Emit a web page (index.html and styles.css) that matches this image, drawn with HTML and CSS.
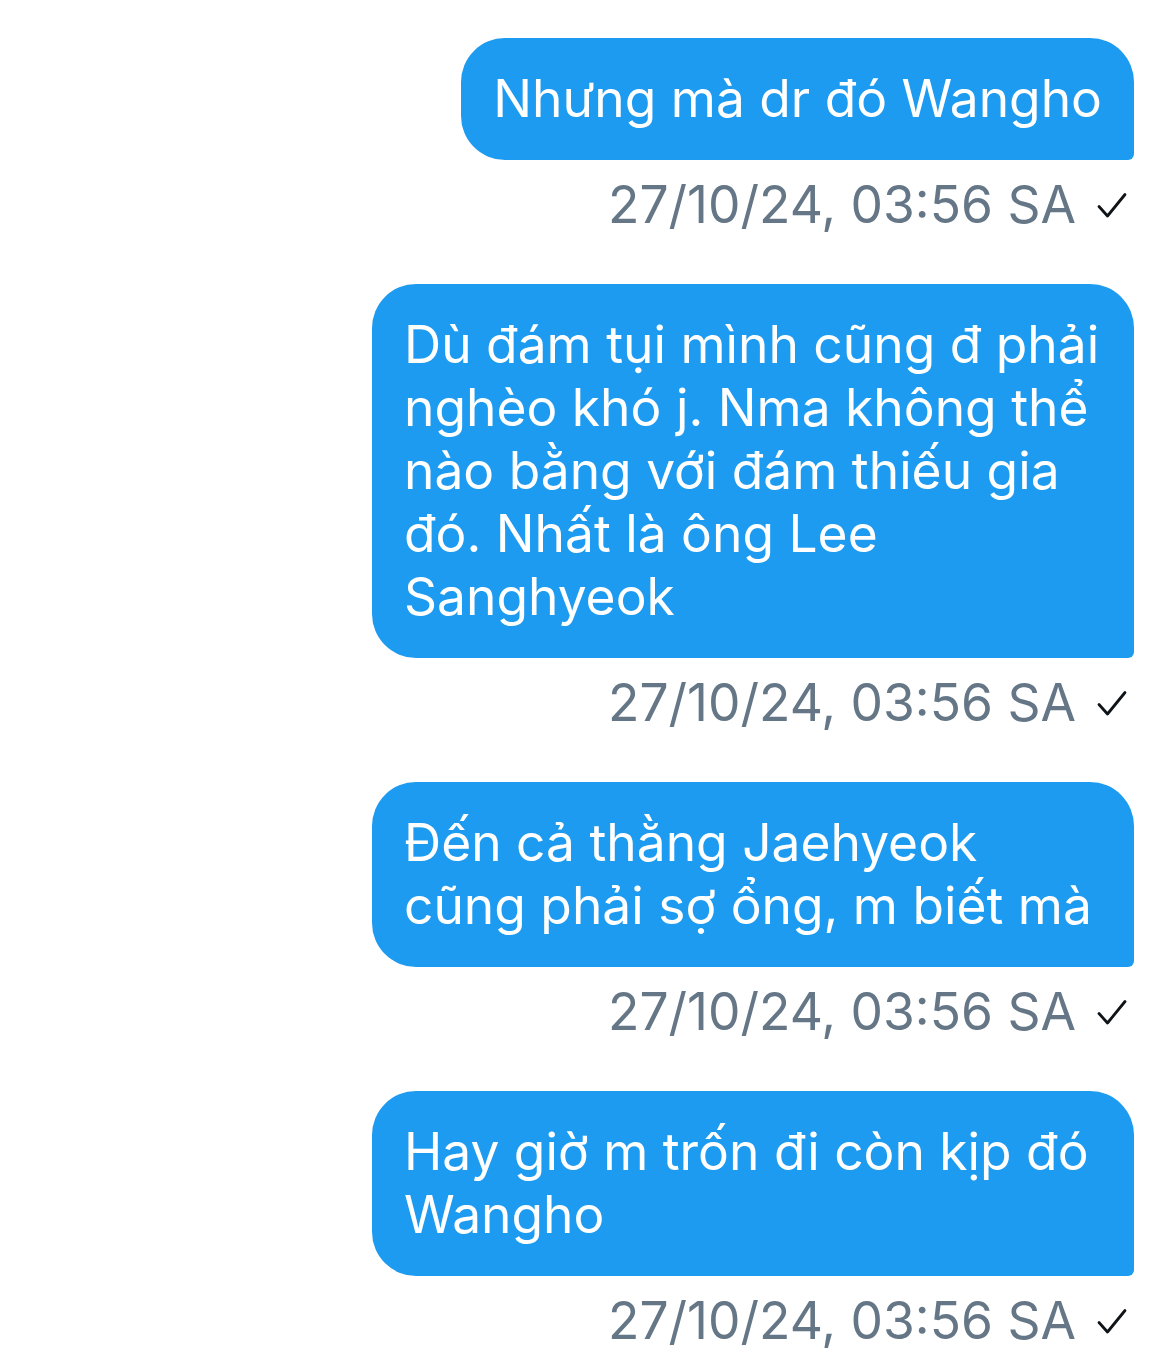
FILE: index.html
```html
<!DOCTYPE html>
<html lang="vi">
<head>
<meta charset="utf-8">
<title>Chat</title>
<link rel="stylesheet" href="styles.css">
</head>
<body>
<main class="thread">
  <div class="msg">
    <div class="bubble">Nhưng mà dr đó Wangho</div>
    <div class="meta"><span class="time">27/10/24, 03:56 SA</span><svg class="tick" viewBox="0 0 30 30" width="30" height="30"><path d="M2 15.5 L10.5 25 L28 3.5" fill="none" stroke="#0f1419" stroke-width="2.8" stroke-linecap="round" stroke-linejoin="round"/></svg></div>
  </div>
  <div class="msg">
    <div class="bubble">Dù đám tụi mình cũng đ phải nghèo khó j. Nma không thể nào bằng với đám thiếu gia đó. Nhất là ông Lee Sanghyeok</div>
    <div class="meta"><span class="time">27/10/24, 03:56 SA</span><svg class="tick" viewBox="0 0 30 30" width="30" height="30"><path d="M2 15.5 L10.5 25 L28 3.5" fill="none" stroke="#0f1419" stroke-width="2.8" stroke-linecap="round" stroke-linejoin="round"/></svg></div>
  </div>
  <div class="msg">
    <div class="bubble">Đến cả thằng Jaehyeok cũng phải sợ ổng, m biết mà</div>
    <div class="meta"><span class="time">27/10/24, 03:56 SA</span><svg class="tick" viewBox="0 0 30 30" width="30" height="30"><path d="M2 15.5 L10.5 25 L28 3.5" fill="none" stroke="#0f1419" stroke-width="2.8" stroke-linecap="round" stroke-linejoin="round"/></svg></div>
  </div>
  <div class="msg">
    <div class="bubble">Hay giờ m trốn đi còn kịp đó Wangho</div>
    <div class="meta"><span class="time">27/10/24, 03:56 SA</span><svg class="tick" viewBox="0 0 30 30" width="30" height="30"><path d="M2 15.5 L10.5 25 L28 3.5" fill="none" stroke="#0f1419" stroke-width="2.8" stroke-linecap="round" stroke-linejoin="round"/></svg></div>
  </div>
</main>
</body>
</html>
```
FILE: styles.css
```css
html, body {
  margin: 0;
  padding: 0;
  background: #ffffff;
}
body {
  font-family: Inter, "Noto Sans", sans-serif;
  width: 1170px;
  height: 1360px;
  overflow: hidden;
}
.thread {
  display: flex;
  flex-direction: column;
  align-items: flex-end;
  padding: 38px 36px 0 0;
}
.msg {
  display: flex;
  flex-direction: column;
  align-items: flex-end;
  margin-bottom: 50px;
}
.bubble {
  box-sizing: border-box;
  max-width: 762px;
  background: #1d9bf0;
  color: #ffffff;
  font-size: 51.5px;
  line-height: 63px;
  padding: 29px 32px 30px 32px;
  border-radius: 44px 44px 6px 44px;
}
.meta {
  display: flex;
  align-items: center;
  gap: 21px;
  margin-top: 14px;
  padding-right: 7px;
  height: 60px;
}
.time {
  color: #657786;
  font-size: 51.5px;
  line-height: 60px;
}
.tick {
  display: block;
  margin-top: 4px;
}
```
